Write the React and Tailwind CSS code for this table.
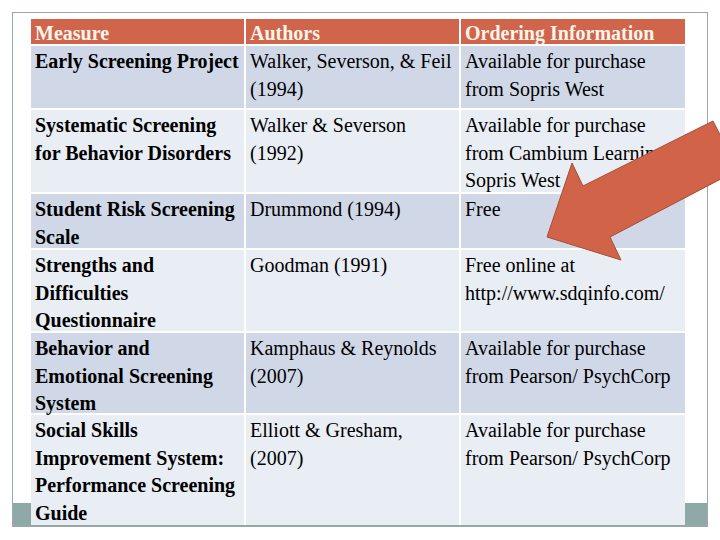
const rows = [
  {
    bg: "bg-[#d0d8e8]",
    h: "h-[62px]",
    measure: ["Early Screening Project"],
    authors: ["Walker, Severson, & Feil", "(1994)"],
    order: ["Available for purchase", "from Sopris West"],
  },
  {
    bg: "bg-[#e9edf4]",
    h: "h-[82px]",
    measure: ["Systematic Screening", "for Behavior Disorders"],
    authors: ["Walker & Severson", "(1992)"],
    order: ["Available for purchase", "from Cambium Learning/", "Sopris West"],
  },
  {
    bg: "bg-[#d0d8e8]",
    h: "h-[54px]",
    measure: ["Student Risk Screening", "Scale"],
    authors: ["Drummond (1994)"],
    order: ["Free"],
  },
  {
    bg: "bg-[#e9edf4]",
    h: "h-[81px]",
    measure: ["Strengths and", "Difficulties", "Questionnaire"],
    authors: ["Goodman (1991)"],
    order: ["Free online at", "http://www.sdqinfo.com/"],
  },
  {
    bg: "bg-[#d0d8e8]",
    h: "h-[80px]",
    measure: ["Behavior and", "Emotional Screening", "System"],
    authors: ["Kamphaus & Reynolds", "(2007)"],
    order: ["Available for purchase", "from Pearson/ PsychCorp"],
  },
  {
    bg: "bg-[#e9edf4]",
    h: "h-[110px]",
    measure: ["Social Skills", "Improvement System:", "Performance Screening", "Guide"],
    authors: ["Elliott & Gresham,", "(2007)"],
    order: ["Available for purchase", "from Pearson/ PsychCorp"],
  },
];

const Lines = ({ lines }) => lines.map((l, i) => <div key={i}>{l}</div>);

const App = () => {
  return (
    <div className="relative w-[720px] h-[540px] overflow-hidden bg-white pt-[12px] pl-[12px] font-['Liberation_Serif',serif] text-[20px] leading-[27.6px] text-black">
      <div className="w-[696px] border border-[#9ea7a7] pt-[6px] pl-[18px]">
        <div className="relative z-10 grid w-[654px] grid-cols-[213px_213px_224px] gap-[2px] bg-white whitespace-nowrap">
          <div className="h-[25px] bg-[#d0654b] px-[4px] pt-[1px] font-bold text-[#fdf5ec]">Measure</div>
          <div className="h-[25px] bg-[#d0654b] px-[4px] pt-[1px] font-bold text-[#fdf5ec]">Authors</div>
          <div className="h-[25px] bg-[#d0654b] px-[4px] pt-[1px] font-bold text-[#fdf5ec]">Ordering Information</div>
          {rows.map((r, i) => (
            <div key={i} className="contents">
              <div className={`${r.bg} ${r.h} px-[4px] pt-[2px] font-bold`}>
                <Lines lines={r.measure} />
              </div>
              <div className={`${r.bg} ${r.h} px-[4px] pt-[2px]`}>
                <Lines lines={r.authors} />
              </div>
              <div className={`${r.bg} ${r.h} overflow-hidden px-[4px] pt-[2px]`}>
                <Lines lines={r.order} />
              </div>
            </div>
          ))}
        </div>
        <div className="mt-[-22px] ml-[-18px] h-[23px] bg-[#8fa9a9]" />
      </div>
      <svg className="absolute left-0 top-0 z-20 pointer-events-none" width="720" height="540" viewBox="0 0 720 540">
        <polygon
          points="547,237 572,163 583,186 713,121 738,170 610,237 621,260"
          fill="#d16349"
          stroke="#a84b36"
          strokeWidth="1"
          strokeLinejoin="miter"
        />
      </svg>
    </div>
  );
};

export default App;
